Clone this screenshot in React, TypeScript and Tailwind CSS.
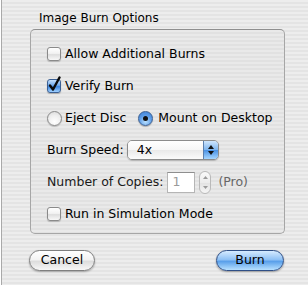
import React from 'react';

const stripes =
  'bg-[repeating-linear-gradient(180deg,#ededed_0px,#ededed_2px,#e4e4e4_2px,#e4e4e4_4px)]';

const Checkbox = ({ checked = false }: { checked?: boolean }) => (
  <span
    className={
      checked
        ? 'relative inline-block w-[14px] h-[14px] rounded-[3px] border border-[#3a5f93] bg-[linear-gradient(180deg,#c6e0fb_0%,#6fa8ea_45%,#3c86df_55%,#9fd0ff_100%)] shadow-[0_1px_1px_rgba(0,0,0,0.25)]'
        : 'relative inline-block w-[14px] h-[14px] rounded-[3px] border border-[#8a8a8a] bg-[linear-gradient(180deg,#ffffff_0%,#f2f2f2_45%,#dedede_55%,#f8f8f8_100%)] shadow-[0_1px_1px_rgba(0,0,0,0.2)]'
    }
  >
    {checked && (
      <svg className="absolute left-[0px] top-[-4px]" width="13" height="16" viewBox="0 0 13 16">
        <path d="M2 9.5 L5 13.5 L11.5 1.5" fill="none" stroke="#0b0b0b" strokeWidth="2.4" strokeLinecap="round" strokeLinejoin="round" />
      </svg>
    )}
  </span>
);

const Radio = ({ selected = false }: { selected?: boolean }) => (
  <span
    className={
      selected
        ? 'flex items-center justify-center w-[15px] h-[15px] rounded-full border border-[#3a5f93] bg-[radial-gradient(circle_at_50%_75%,#b9e0ff_0%,#5a9ae6_55%,#3b7fd6_100%)] shadow-[0_1px_1px_rgba(0,0,0,0.25)]'
        : 'flex items-center justify-center w-[15px] h-[15px] rounded-full border border-[#8a8a8a] bg-[radial-gradient(circle_at_50%_75%,#ffffff_0%,#eeeeee_55%,#d6d6d6_100%)] shadow-[0_1px_1px_rgba(0,0,0,0.2)]'
    }
  >
    {selected && <span className="w-[5px] h-[5px] rounded-full bg-[#111]" />}
  </span>
);

const App = () => {
  return (
    <div
      className={`w-[308px] h-[285px] ${stripes} border-l border-[#a9a9a9] ml-[1px] text-[12.5px] text-black font-['Lucida_Grande','DejaVu_Sans',sans-serif] leading-none`}
    >
      <div className="pl-[37px] pt-[12px] h-[29px] text-[12px]">Image Burn Options</div>

      <div className="ml-[28px] w-[255px] h-[205px] rounded-[5px] border border-[#a6a6a6] border-t-[#8f8f8f] bg-[repeating-linear-gradient(180deg,#e9e9e9_0px,#e9e9e9_2px,#e1e1e1_2px,#e1e1e1_4px)] pl-[16px] pt-[8px]">
        <div className="h-[32px] flex items-center gap-[4px]">
          <Checkbox />
          <span>Allow Additional Burns</span>
        </div>
        <div className="h-[32px] flex items-center gap-[4px]">
          <Checkbox checked />
          <span>Verify Burn</span>
        </div>
        <div className="h-[32px] flex items-center">
          <Radio />
          <span className="ml-[3px]">Eject Disc</span>
          <span className="ml-[12px]">
            <Radio selected />
          </span>
          <span className="ml-[5px]">Mount on Desktop</span>
        </div>
        <div className="h-[32px] flex items-center">
          <span>Burn Speed:</span>
          <div className="ml-[3px] flex w-[92px] h-[20px] rounded-[5px] border border-[#8c8c8c] overflow-hidden shadow-[0_1px_1px_rgba(0,0,0,0.2)]">
            <div className="flex-1 flex items-center pl-[9px] bg-[linear-gradient(180deg,#ffffff_0%,#f6f6f6_50%,#e9e9e9_51%,#fbfbfb_100%)]">
              4x
            </div>
            <div className="w-[15px] border-l border-[#5b7fae] flex flex-col items-center justify-center gap-[2px] bg-[linear-gradient(180deg,#cfe6fd_0%,#80b6ef_48%,#4b92e4_52%,#a6d6ff_100%)]">
              <svg width="6" height="4" viewBox="0 0 6 4"><path d="M0 4 L3 0 L6 4 Z" fill="#111" /></svg>
              <svg width="6" height="4" viewBox="0 0 6 4"><path d="M0 0 L3 4 L6 0 Z" fill="#111" /></svg>
            </div>
          </div>
        </div>
        <div className="h-[32px] flex items-center">
          <span className="text-[#1a1a1a]">Number of Copies:</span>
          <div className="ml-[4px] w-[28px] h-[21px] border border-[#b5b5b5] border-t-[#8e8e8e] bg-white flex items-center pl-[4px] text-[#9a9a9a]">
            1
          </div>
          <div className="ml-[4px] w-[12px] h-[23px] rounded-[6px] border border-[#b9b9b9] bg-[linear-gradient(180deg,#fafafa_0%,#ececec_50%,#e2e2e2_51%,#f6f6f6_100%)] flex flex-col items-center justify-between py-[4px]">
            <svg width="5" height="3" viewBox="0 0 5 3"><path d="M0 3 L2.5 0 L5 3 Z" fill="#9a9a9a" /></svg>
            <svg width="5" height="3" viewBox="0 0 5 3"><path d="M0 0 L2.5 3 L5 0 Z" fill="#9a9a9a" /></svg>
          </div>
          <span className="ml-[7px] text-[#666]">(Pro)</span>
        </div>
        <div className="h-[32px] flex items-center gap-[4px]">
          <Checkbox />
          <span>Run in Simulation Mode</span>
        </div>
      </div>

      <div className="flex justify-between pl-[27px] pr-[25px] pt-[16px]">
        <button className="w-[66px] h-[21px] rounded-full border border-[#7f7f7f] bg-[linear-gradient(180deg,#ffffff_0%,#f3f3f3_45%,#dddddd_55%,#f7f7f7_100%)] shadow-[0_1px_2px_rgba(0,0,0,0.3)] flex items-center justify-center">
          Cancel
        </button>
        <button className="w-[68px] h-[21px] rounded-full border border-[#2f4f86] bg-[linear-gradient(180deg,#d6ebff_0%,#8fc1f5_45%,#5aa0ea_55%,#b8e1ff_100%)] shadow-[0_1px_2px_rgba(0,0,0,0.35)] flex items-center justify-center">
          Burn
        </button>
      </div>
    </div>
  );
};

export default App;
